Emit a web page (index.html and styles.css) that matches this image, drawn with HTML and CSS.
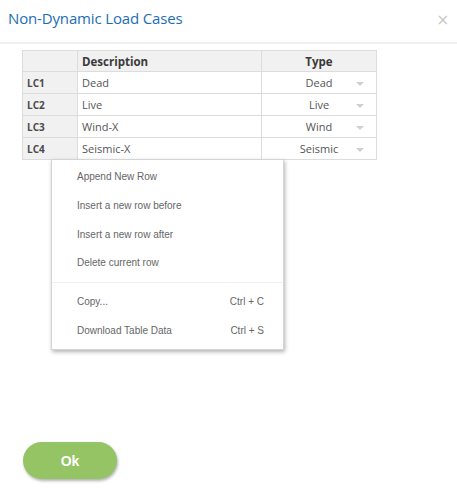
FILE: index.html
```html
<!DOCTYPE html>
<html lang="en">
<head>
    <meta charset="UTF-8">
    <title>Non-Dynamic Load Cases</title>
    <link rel="stylesheet" href="styles.css">
</head>
<body>

<div class="dialog">
    <!--Header-->
    <div class="dialog-header">
        <h1>Non-Dynamic Load Cases</h1>
        <span class="close">&times;</span>
    </div>

    <div class="dialog-body">
        <table class="load-cases">
            <thead>
                <tr>
                    <th class="col-id"></th>
                    <th class="col-desc">Description</th>
                    <th class="col-type">Type</th>
                </tr>
            </thead>
            <tbody>
                <tr>
                    <td class="row-id">LC1</td>
                    <td>Dead</td>
                    <td class="type">Dead<span class="arrow"></span></td>
                </tr>
                <tr>
                    <td class="row-id">LC2</td>
                    <td>Live</td>
                    <td class="type">Live<span class="arrow"></span></td>
                </tr>
                <tr>
                    <td class="row-id">LC3</td>
                    <td>Wind-X</td>
                    <td class="type">Wind<span class="arrow"></span></td>
                </tr>
                <tr>
                    <td class="row-id">LC4</td>
                    <td>Seismic-X</td>
                    <td class="type">Seismic<span class="arrow"></span></td>
                </tr>
            </tbody>
        </table>

        <!--Context menu-->
        <ul class="context-menu">
            <li>Append New Row</li>
            <li>Insert a new row before</li>
            <li>Insert a new row after</li>
            <li>Delete current row</li>
            <li class="separator"></li>
            <li>Copy...<span class="shortcut">Ctrl + C</span></li>
            <li>Download Table Data<span class="shortcut">Ctrl + S</span></li>
        </ul>
    </div>

    <div class="dialog-footer">
        <button class="ok-btn">Ok</button>
    </div>
</div>

</body>
</html>
```

FILE: styles.css
```css
body {
    margin: 0;
    background: #fff;
    font-family: "Open Sans", sans-serif;
}

.dialog {
    width: 457px;
    height: 504px;
}

.dialog-header {
    display: flex;
    align-items: center;
    justify-content: space-between;
    height: 42px;
    padding: 0 8px;
    border-bottom: 2px solid #f0f0f0;
}

.dialog-header h1 {
    margin: 0;
    font-size: 15px;
    font-weight: normal;
    letter-spacing: -0.15px;
    color: #1d6db2;
    padding-bottom: 6px;
}

.close {
    color: #c8c8c8;
    font-family: "DejaVu Sans", sans-serif;
    font-size: 15px;
    padding-bottom: 3px;
    margin-right: 0;
}

.dialog-body {
    position: relative;
    height: 398px;
    padding: 6px 0 0 22px;
    box-sizing: border-box;
}

.load-cases {
    border-collapse: collapse;
    font-size: 11px;
    color: #555;
}

.load-cases th, .load-cases td {
    border: 1px solid #dcdcdc;
    padding: 0 4px;
    text-align: left;
}

.load-cases th {
    height: 20px;
    background: #f1f1f1;
    font-weight: bold;
    font-size: 11.5px;
    color: #3a3a3a;
}

.load-cases td {
    height: 21px;
}

.col-id { width: 46px; }
.col-desc { width: 175px; }
.col-type { width: 106px; }

.load-cases th.col-type {
    text-align: center;
}

.row-id {
    background: #f1f1f1;
    font-weight: bold;
    font-size: 10px;
    color: #4a4a4a;
    padding-left: 3px;
}

.load-cases td.type {
    position: relative;
    text-align: center;
}

.arrow {
    position: absolute;
    right: 12px;
    top: 10px;
    width: 0;
    height: 0;
    border-left: 4px solid transparent;
    border-right: 4px solid transparent;
    border-top: 4px solid #cfcfcf;
}

.context-menu {
    position: absolute;
    left: 51px;
    top: 115px;
    width: 231px;
    margin: 0;
    padding: 2.5px 0 4px;
    list-style: none;
    background: #fff;
    border: 1px solid #d4d4d4;
    box-shadow: 1px 2px 4px rgba(0, 0, 0, 0.3);
    font-family: "Liberation Sans", Arial, sans-serif;
    font-size: 10px;
    color: #666;
}

.context-menu li {
    display: flex;
    justify-content: space-between;
    align-items: center;
    height: 28.7px;
    padding: 0 19px 0 25px;
}

.context-menu li.separator {
    height: 0;
    margin: 4.5px 0;
    border-top: 1px solid #eee;
    padding: 0;
}

.shortcut {
    color: #666;
}

.dialog-footer {
    padding-left: 23px;
}

.ok-btn {
    width: 94px;
    height: 37px;
    border: none;
    border-radius: 19px;
    background: #94c464;
    color: #fff;
    font-family: "Liberation Sans", Arial, sans-serif;
    font-weight: bold;
    font-size: 14px;
    box-shadow: 1px 2px 3px rgba(0, 0, 0, 0.3);
}
```
